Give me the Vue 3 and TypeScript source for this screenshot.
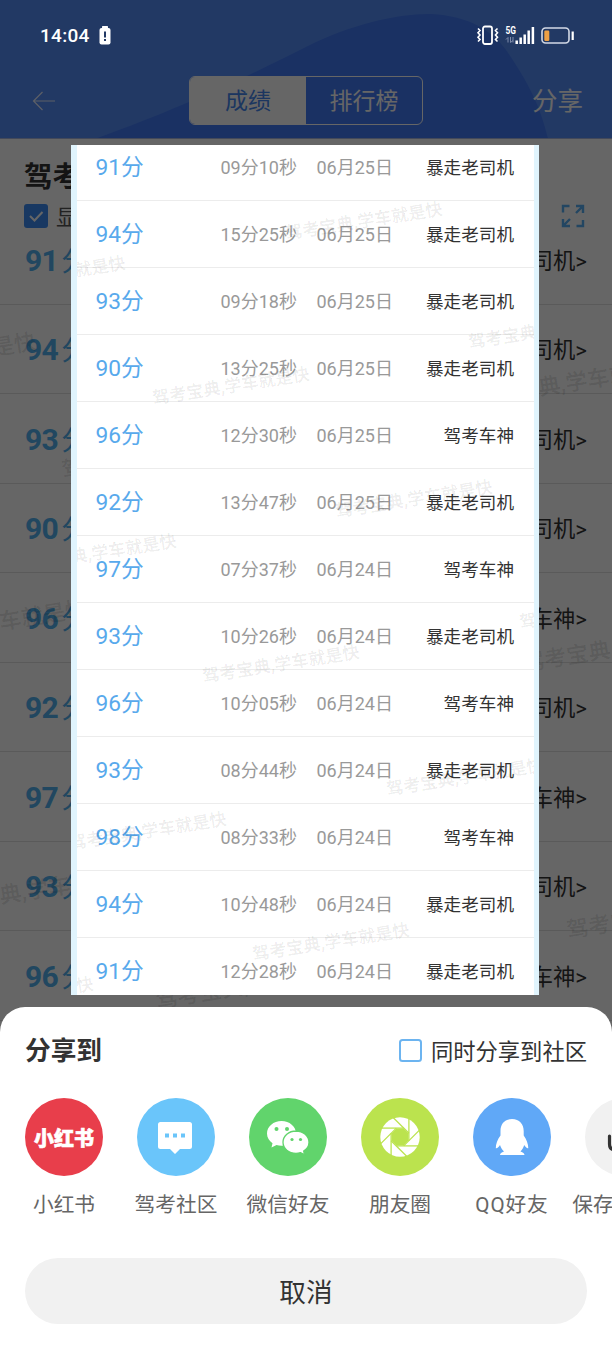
<script setup lang="ts">
interface Rec {
  score: number
  time: string
  date: string
  rank: string
}
interface Mark {
  x: number
  y: number
}

const A = '暴走老司机'
const B = '驾考车神'

const records: Rec[] = [
  { score: 91, time: '09分10秒', date: '06月25日', rank: A },
  { score: 94, time: '15分25秒', date: '06月25日', rank: A },
  { score: 93, time: '09分18秒', date: '06月25日', rank: A },
  { score: 90, time: '13分25秒', date: '06月25日', rank: A },
  { score: 96, time: '12分30秒', date: '06月25日', rank: B },
  { score: 92, time: '13分47秒', date: '06月25日', rank: A },
  { score: 97, time: '07分37秒', date: '06月24日', rank: B },
  { score: 93, time: '10分26秒', date: '06月24日', rank: A },
  { score: 96, time: '10分05秒', date: '06月24日', rank: B },
  { score: 93, time: '08分44秒', date: '06月24日', rank: A },
  { score: 98, time: '08分33秒', date: '06月24日', rank: B },
  { score: 94, time: '10分48秒', date: '06月24日', rank: A },
  { score: 91, time: '12分28秒', date: '06月24日', rank: A },
]
const pageRecords = records.slice(0, 9)

// Centres of the repeated watermark
const cardMarks: Mark[] = [
  { x: 364, y: 221 }, { x: 47, y: 275 }, { x: 547, y: 330 }, { x: 231, y: 386 },
  { x: 414, y: 499 }, { x: 98, y: 553 }, { x: 598, y: 610 }, { x: 281, y: 664 },
  { x: 465, y: 777 }, { x: 148, y: 831 }, { x: 331, y: 942 }, { x: 15, y: 996 },
]
const pageMarks: Mark[] = [
  { x: -65, y: 358 }, { x: 574, y: 383 }, { x: 163, y: 455 }, { x: -14, y: 625 }, { x: 624, y: 648 },
  { x: 210, y: 724 }, { x: 35, y: 891 }, { x: 668, y: 915 }, { x: 257, y: 985 },
]
const markText = '驾考宝典,学车就是快'

const targets = [
  { id: 'red', label: '小红书' },
  { id: 'forum', label: '驾考社区' },
  { id: 'wechat', label: '微信好友' },
  { id: 'moments', label: '朋友圈' },
  { id: 'qq', label: 'QQ好友' },
  { id: 'save', label: '保存到相册' },
]
const blades = [0, 45, 90, 135, 180, 225, 270, 315]
</script>

<template>
  <div class="screen">
    <div class="page">
      <header class="top">
        <svg class="wave" width="612" height="138" viewBox="0 0 612 138">
          <path d="M95 139C180 108 235 83 306 47C350 25 395 14 430 14C470 16 492 31 506 50C528 82 540 105 548 139Z" fill="#417af7" />
        </svg>
        <nav class="nav">
          <svg class="back" width="24" height="20" viewBox="0 0 24 20">
            <path d="M10.500 1L1.500 10L10.500 19M1.500 10H23" fill="none" stroke="#fff" stroke-opacity=".85" stroke-width="1.200" />
          </svg>
          <div class="tabs">
            <span class="tab on">成绩</span>
            <span class="tab">排行榜</span>
          </div>
          <span class="share">分享</span>
        </nav>
      </header>
      <h1 class="title">驾考宝典成绩单</h1>
      <div class="tools">
        <svg width="24" height="24" viewBox="0 0 24 24">
          <rect width="24" height="24" rx="3" fill="#3d8df5" />
          <path d="M6 12L10.500 16.500L18.500 8" fill="none" stroke="#fff" stroke-width="2" />
        </svg>
        <span class="toolsText">显示水印</span>
        <svg class="expand" width="24" height="24" viewBox="0 0 24 24" fill="none" stroke="#58b0f5" stroke-width="2.400">
          <path d="M2 8.500V2H8.500M22 16V22H15.500M15 2H22V9M22 2L15 9M2 15V22H9M2 22L9 15" />
        </svg>
      </div>
      <ul class="pageList">
        <li v-for="(r, i) in pageRecords" :key="i" class="pageRow">
          <span class="pageScore">{{ r.score }}<i>分</i></span>
          <span class="pageRank">{{ r.rank }}&gt;</span>
        </li>
      </ul>
      <span
        v-for="(m, i) in pageMarks"
        :key="'p' + i"
        class="mark big"
        :style="{ left: m.x + 'px', top: m.y + 'px' }"
      >{{ markText }}</span>
    </div>

    <div class="mask"></div>

    <div class="status">
      <span class="clock">14:04</span>
      <svg class="lowBat" width="12" height="19" viewBox="0 0 12 19">
        <rect x="3" y="0" width="6" height="2" rx=".6" fill="#fff" />
        <rect x=".5" y="2" width="11" height="16.500" rx="2" fill="#fff" />
        <path d="M6 5.500V11.500M6 13V15" stroke="#223964" stroke-width="2" />
      </svg>
      <svg class="sys" width="100" height="22" viewBox="0 0 100 22">
        <g fill="none" stroke="#fff">
          <rect x="7" y="2.500" width="9" height="17.500" rx="2" stroke-width="1.800" />
          <path d="M2 4.500L4 6.500L2 8.700L4 11L2 13.300L4 15.500L2 17.500M21.500 4.500L19.500 6.500L21.500 8.700L19.500 11L21.500 13.300L19.500 15.500L21.500 17.500" stroke-width="1.600" />
        </g>
        <text x="29.500" y="9.500" class="net" textLength="10.500" lengthAdjust="spacingAndGlyphs">5G</text>
        <path d="M32 18.500V13.500L30 15.500M34.500 13V18.500L37 16.500M37 13V18.500" fill="none" stroke="#7f8cab" stroke-width="1" />
        <path d="M40.700 16.500V20M44.700 13.500V20M48.700 10.500V20M52.700 6.500V20M56.900 3V20" stroke="#fff" stroke-width="2.500" />
        <rect x="66" y="4" width="27" height="15" rx="3.500" fill="none" stroke="#d3d9e6" stroke-width="1.600" />
        <rect x="68.300" y="6.500" width="5" height="10.500" rx="1.200" fill="#eda045" />
        <path d="M96.700 7.500V16" stroke="#fff" stroke-width="2.200" />
      </svg>
    </div>

    <section class="card">
      <ul class="cardList">
        <li v-for="(r, i) in records" :key="i" class="row">
          <span class="score">{{ r.score }}分</span>
          <span class="time">{{ r.time }}</span>
          <span class="date">{{ r.date }}</span>
          <span class="rank">{{ r.rank }}</span>
        </li>
      </ul>
      <span
        v-for="(m, i) in cardMarks"
        :key="'c' + i"
        class="mark"
        :style="{ left: m.x - 77 + 'px', top: m.y - 145 + 'px' }"
      >{{ markText }}</span>
    </section>

    <section class="sheet">
      <div class="sheetHead">
        <h2>分享到</h2>
        <span class="box"></span>
        <span class="also">同时分享到社区</span>
      </div>
      <div class="targets">
        <div v-for="t in targets" :key="t.id" class="target">
          <div class="disc" :class="t.id">
            <span v-if="t.id === 'red'" class="logo">小红书</span>
            <svg v-else-if="t.id === 'forum'" width="78" height="78" viewBox="0 0 78 78">
              <path d="M23.500 24H52.500Q55 24 55 26.500V48.500Q55 51 52.500 51H43L38 56L33 51H23.500Q21 51 21 48.500V26.500Q21 24 23.500 24Z" fill="#fff" />
              <path d="M28 35.500h4v4h-4zM36 35.500h4v4h-4zM44 35.500h4v4h-4z" fill="#6ac5fa" />
            </svg>
            <svg v-else-if="t.id === 'wechat'" width="78" height="78" viewBox="0 0 78 78">
              <path d="M32.500 23C24.500 23 18 28.500 18 35.500C18 39.500 20.200 43 23.500 45.300L22.500 49.500L27.500 47C29 47.500 30.800 47.800 32.500 47.800C40.500 47.800 47 42.500 47 35.500S40.500 23 32.500 23Z" fill="#fff" />
              <path d="M47 33C39.800 33 34 38 34 44.300S39.800 55.300 47 55.300C48.600 55.300 50.200 55 51.600 54.600L55.500 56.800L54.700 53.100C57.900 51.100 60 48 60 44.300C60 38 54.200 33 47 33Z" fill="#fff" stroke="#61d46c" stroke-width="1.300" />
              <g fill="#61d46c">
                <circle cx="27.500" cy="31" r="2" /><circle cx="38" cy="31" r="2" />
                <circle cx="43" cy="41.500" r="1.600" /><circle cx="51.500" cy="41.500" r="1.600" />
              </g>
            </svg>
            <svg v-else-if="t.id === 'moments'" width="78" height="78" viewBox="0 0 78 78">
              <circle cx="39" cy="39" r="19.700" fill="#fff" />
              <path d="M35.500 30.500H42.500L47.500 35.500V42.500L42.500 47.500H35.500L30.500 42.500V35.500Z" fill="#bbe34e" />
              <path v-for="a in blades" :key="a" :transform="`rotate(${a} 39 39)`" d="M42.700 30.100H20" fill="none" stroke="#bbe34e" stroke-width="1.300" />
            </svg>
            <svg v-else-if="t.id === 'qq'" width="78" height="78" viewBox="0 0 78 78">
              <path d="M39 21C31.500 21 27.500 26 27.500 33V37.500C24.500 41.500 22.800 46 22.800 50.200C24 50.800 25.800 49 27 47C27.800 49.500 29 51.500 31 53.500C28.500 54.300 27 55.500 27 57H51.500C51.500 55.500 50 54.300 47.500 53.500C49.300 51.500 50.500 49.500 51.200 47C52.500 49 54.200 50.800 55.300 50.200C55.300 46 53.500 41.500 50.700 37.500V33C50.700 26 46.500 21 39 21Z" fill="#fff" />
            </svg>
            <svg v-else width="78" height="78" viewBox="0 0 78 78">
              <path d="M24.500 38V46Q24.500 52 30.500 52H47.500Q53.500 52 53.500 46V38M39 24V42M33 37L39 43L45 37" fill="none" stroke="#333" stroke-width="3.200" stroke-linecap="round" />
            </svg>
          </div>
          <span class="label" :class="{ wide: t.id === 'qq' }">{{ t.label }}</span>
        </div>
      </div>
      <button class="cancel">取消</button>
    </section>
  </div>
</template>

<style>
body {
  overflow: hidden;
}
</style>

<style scoped>
.screen {
  position: relative;
  width: 612px;
  height: 1350px;
  overflow: hidden;
  background: #fff;
  font-family: Roboto, "Noto Sans CJK SC", sans-serif;
  color: #333;
}
ul {
  list-style: none;
  margin: 0;
  padding: 0;
}
.page {
  position: relative;
  height: 1350px;
  overflow: hidden;
}
.top {
  position: relative;
  height: 139px;
  background: #558efa;
  border-bottom: 1px solid #a9b6e0;
  box-sizing: border-box;
}
.wave {
  position: absolute;
  left: 0;
  top: 0;
}
.nav {
  position: relative;
  display: flex;
  align-items: center;
  height: 49px;
  padding: 76px 29px 0 32px;
  color: #fff;
}
.tabs {
  display: flex;
  width: 234px;
  height: 49px;
  margin-left: 133px;
  box-sizing: border-box;
  border: 1px solid #fff;
  border-radius: 6px;
  overflow: hidden;
}
.tab {
  flex: 1;
  text-align: center;
  font-size: 23px;
  line-height: 50px;
}
.tab.on {
  background: #fff;
  color: #4587ef;
}
.share {
  margin-left: auto;
  font-size: 25.500px;
  line-height: 48px;
}
.title {
  margin: 21px 0 0 24px;
  font-size: 28.500px;
  line-height: 36px;
  font-weight: 700;
}
.tools {
  display: flex;
  align-items: center;
  height: 24px;
  margin: 8px 27px 0 24px;
}
.toolsText {
  margin-left: 8px;
  padding-top: 3px;
  font-size: 22px;
  line-height: 24px;
  color: #555;
}
.expand {
  margin-left: auto;
}
.pageList {
  margin-top: -13px;
}
.pageRow {
  display: flex;
  justify-content: space-between;
  align-items: center;
  height: 89.500px;
  padding: 3px 25px 0;
  box-sizing: border-box;
  border-bottom: 1px solid #e2e2e2;
  line-height: 40px;
}
.pageScore {
  font-size: 30px;
  font-weight: 700;
  letter-spacing: -0.600px;
  color: #53b1ef;
}
.pageScore i {
  font-style: normal;
  font-size: 27.500px;
  font-weight: 400;
  line-height: 1;
  margin-left: 3px;
}
.pageRank {
  font-size: 22.300px;
}
.mask {
  position: absolute;
  inset: 0;
  background: rgba(0, 0, 0, 0.6);
}
.status {
  position: absolute;
  left: 40px;
  right: 36px;
  top: 24px;
  height: 22px;
  display: flex;
  align-items: center;
  color: #fff;
}
.clock {
  width: 51px;
  padding-top: 2px;
  font-size: 19px;
  font-weight: 500;
  letter-spacing: 0.300px;
  line-height: 22px;
}
.lowBat {
  margin-left: 8px;
}
.sys {
  margin-left: auto;
}
.net {
  fill: #fff;
  font-size: 10px;
  font-weight: 700;
}
.card {
  position: absolute;
  left: 71px;
  top: 145px;
  width: 457px;
  height: 850px;
  border: solid #e0f4fd;
  border-width: 0 5.500px 0 6px;
  background: #fff;
  overflow: hidden;
}
.cardList {
  margin-top: -11px;
}
.row {
  display: grid;
  grid-template-columns: 125px 96px 86px 1fr;
  align-items: center;
  height: 67px;
  padding: 0 20px 0 18.500px;
  box-sizing: border-box;
  border-bottom: 1px solid #ececec;
  line-height: 30px;
  white-space: nowrap;
}
.score {
  padding-top: 2px;
  font-size: 22.700px;
  color: #58a9ec;
}
.time,
.date {
  padding-top: 1px;
  font-size: 18px;
  color: #999;
}
.rank {
  padding-top: 1px;
  font-size: 17.600px;
  text-align: right;
}
.mark {
  position: absolute;
  font-size: 17px;
  line-height: 20px;
  font-weight: 500;
  letter-spacing: 0.200px;
  white-space: nowrap;
  color: rgba(0, 0, 0, 0.080);
  -webkit-text-stroke: 0.500px rgba(0, 0, 0, 0.050);
  transform: translate(-50%, -50%) rotate(-9deg);
}
.mark.big {
  font-size: 22px;
  color: rgba(0, 0, 0, 0.110);
}
.sheet {
  position: absolute;
  left: 0;
  top: 1007px;
  width: 612px;
  height: 343px;
  background: #fff;
  border-radius: 25px 25px 0 0;
  overflow: hidden;
}
.sheetHead {
  display: flex;
  align-items: center;
  height: 86px;
  padding: 0 25px;
}
h2 {
  margin: 0 auto 0 0;
  padding-bottom: 3px;
  font-size: 25.700px;
  font-weight: 700;
}
.box {
  width: 23px;
  height: 23px;
  box-sizing: border-box;
  border: 2px solid #6cb4f0;
  border-radius: 3.500px;
  margin-right: 9px;
}
.also {
  padding-bottom: 1px;
  font-size: 22.300px;
}
.targets {
  display: flex;
  gap: 12px;
  margin: 5px 0 0 14px;
}
.target {
  flex: 0 0 100px;
  min-width: 0;
  display: flex;
  flex-direction: column;
  align-items: center;
}
.disc {
  width: 78px;
  height: 78px;
  border-radius: 50%;
  display: flex;
  align-items: center;
  justify-content: center;
}
.red { background: #e83e4b; }
.forum { background: #6ac5fa; }
.wechat { background: #61d46c; }
.moments { background: #bbe34e; }
.qq { background: #60a8f7; }
.save { background: #f1f1f1; }
.logo {
  color: #fff;
  font-size: 20px;
  font-weight: 900;
  -webkit-text-stroke: 0.600px #fff;
}
.label {
  margin-top: 14px;
  font-size: 20.700px;
  line-height: 30px;
  color: #666;
  white-space: nowrap;
}
.wide {
  letter-spacing: 0.900px;
}
.cancel {
  display: block;
  width: 562px;
  height: 66px;
  margin: 38px 25px 0;
  padding: 0 0 2px;
  border: 0;
  border-radius: 33px;
  background: #f1f1f1;
  color: #333;
  font-family: inherit;
  font-size: 26.700px;
}
</style>
